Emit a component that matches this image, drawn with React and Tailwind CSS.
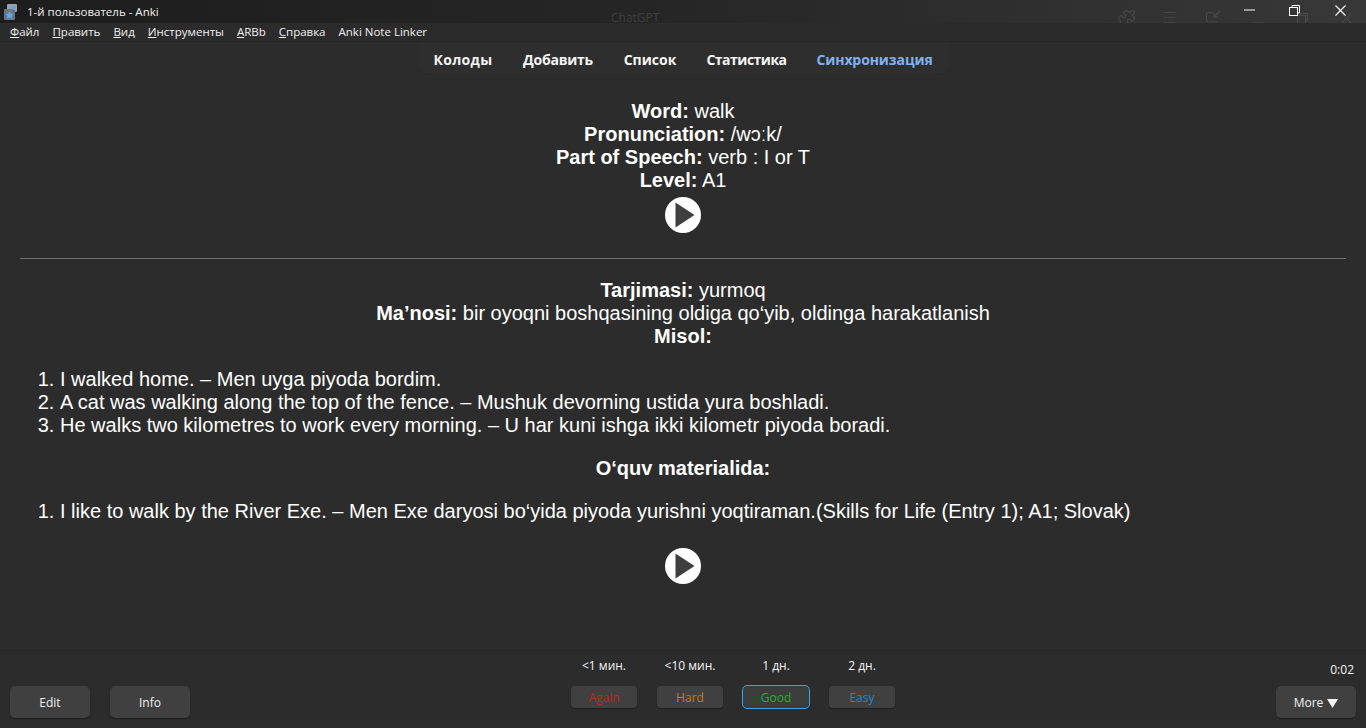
import { Puzzle, Menu } from "lucide-react";

const ui = "font-['Open_Sans','Noto_Sans',sans-serif]";

const menus = [
  ["Ф", "айл"],
  ["П", "равить"],
  ["В", "ид"],
  ["И", "нструменты"],
  ["A", "RBb"],
  ["С", "правка"],
  ["", "Anki Note Linker"],
];

const tabs = [
  { name: "Колоды", width: "w-[59px]", track: "tracking-[0.3px]" },
  { name: "Добавить", width: "w-[71px]", track: "tracking-[-0.25px]" },
  { name: "Список", width: "w-[53px]", track: "" },
  { name: "Статистика", width: "w-[80px]", track: "tracking-[-0.5px]" },
];

const answers = [
  { time: "<1 мин.", label: "Again", color: "text-[#c8201f]" },
  { time: "<10 мин.", label: "Hard", color: "text-[#c87a25]" },
  { time: "1 дн.", label: "Good", color: "text-[#2fae2a]", focus: true },
  { time: "2 дн.", label: "Easy", color: "text-[#2588c8]" },
];

function PlayButton() {
  return (
    <svg viewBox="0 0 36 36" className="block w-9 h-9 mx-auto">
      <circle cx="18" cy="18" r="18" fill="#ffffff" />
      <path d="M10.5 5.5 L29.5 18 L10.5 30.5 Z" fill="#3f3f3f" />
    </svg>
  );
}

function AppIcon() {
  return (
    <svg viewBox="0 0 14 16" className="w-[14px] h-4">
      <rect x="3" y="0" width="10" height="8" rx="1" fill="#9aa0aa" />
      <rect x="0" y="5" width="11" height="11" rx="1" fill="#6b7280" />
      <path d="M9.5 1 l.9 1.7 1.9.3-1.4 1.3.4 1.9-1.8-.9-1.8.9.4-1.9L6.7 3l1.9-.3z" fill="#5aa9ee" />
      <path d="M5.5 7 l1.3 2.6 2.8.4-2 2 .5 2.8-2.6-1.4-2.6 1.4.5-2.8-2-2 2.8-.4z" fill="#5aa9ee" />
    </svg>
  );
}

function GhostIcons() {
  return (
    <div className="absolute inset-0 overflow-hidden text-[#4a4a4a]">
      <Puzzle size={19} strokeWidth={1.4} className="absolute left-[1117px] top-[9px]" />
      <Menu size={17} strokeWidth={1.2} className="absolute left-[1161px] top-[9px]" />
      <svg width="16" height="16" viewBox="0 0 16 16" fill="none" stroke="currentColor" strokeWidth="1.2" className="absolute left-[1206px] top-[10px]">
        <path d="M6 2.5H2.5a2 2 0 0 0-2 2V10a2 2 0 0 0 2 2h9" />
        <path d="M14 1L8 7M8 3v4h4" />
      </svg>
      <svg width="11" height="2" viewBox="0 0 11 2" className="absolute left-[1253px] top-[22px]">
        <path d="M0 1h11" stroke="currentColor" />
      </svg>
      <svg width="11" height="11" viewBox="0 0 11 11" fill="none" stroke="currentColor" className="absolute left-[1297px] top-[13px]">
        <rect x="0.5" y="2.5" width="8" height="8" />
        <path d="M3 2.5V0.5h7.5V8H8.5" />
      </svg>
      <svg width="11" height="11" viewBox="0 0 11 11" stroke="currentColor" className="absolute left-[1341px] top-[13px]">
        <path d="M0.5 0.5l10 10M10.5 0.5l-10 10" />
      </svg>
    </div>
  );
}

function TitleBar() {
  return (
    <div className="relative h-[23px] shrink-0 flex items-center bg-gradient-to-r from-[#1d1d1d] via-[#262626] to-[#383838]">
      <GhostIcons />
      <div className="relative ml-1 w-[14px]">
        <AppIcon />
      </div>
      <span className={`${ui} relative ml-[9px] text-[11.5px] text-[#f0f0f0]`}>1-й пользователь - Anki</span>
      <span className={`${ui} absolute left-[611px] top-[10px] text-[12px] leading-4 text-[#3f3f3f]`}>ChatGPT</span>
      <div className="relative ml-auto mr-[3px] flex items-start h-full pt-[5px]">
        <div className="w-[45px] flex justify-center pt-[4px]">
          <svg width="11" height="2" viewBox="0 0 11 2"><path d="M0 1h11" stroke="#fff" /></svg>
        </div>
        <div className="w-[45px] flex justify-center">
          <svg width="11" height="11" viewBox="0 0 11 11" fill="none" stroke="#fff">
            <rect x="0.5" y="2.5" width="8" height="8" />
            <path d="M3 2.5V0.5h7.5V8H8.5" />
          </svg>
        </div>
        <div className="ml-[1px] w-[45px] flex justify-center">
          <svg width="11" height="11" viewBox="0 0 11 11" stroke="#fff" strokeWidth="1.1">
            <path d="M0.5 0.5l10 10M10.5 0.5l-10 10" />
          </svg>
        </div>
      </div>
    </div>
  );
}

function MenuBar() {
  return (
    <div className={`${ui} h-[19px] shrink-0 flex items-center pl-[10px] gap-[13px] bg-[#2b2b2b] border-b border-[#262626] text-[11.5px] text-[#f0f0f0]`}>
      {menus.map(([key, rest]) => (
        <span key={rest}>
          <span className="underline">{key}</span>
          {rest}
        </span>
      ))}
    </div>
  );
}

function TopTabs() {
  return (
    <div className="h-[33px] shrink-0 flex justify-center">
      <div className={`${ui} h-[33px] pt-[3px] flex items-center gap-[30px] px-[17px] bg-[#2e2e2e] rounded-b-xl border-b border-[#292929] text-[14px] font-bold whitespace-nowrap`}>
        {tabs.map((t) => (
          <span key={t.name} className={`${t.width} ${t.track} flex justify-center text-[#f4f4f4]`}>{t.name}</span>
        ))}
        <span className="w-[116px] flex justify-center tracking-[-0.1px] text-[#7fb3ee]">Синхронизация</span>
      </div>
    </div>
  );
}

function Card() {
  return (
    <div className="flex-1 px-5 pt-[25px] font-['Liberation_Sans',Arial,sans-serif] text-[20px] leading-[23px] text-white">
      <div className="text-center">
        <div><b>Word:</b> walk</div>
        <div><b>Pronunciation:</b> /wɔːk/</div>
        <div><b>Part of Speech:</b> verb : I or T</div>
        <div><b>Level:</b> A1</div>
      </div>
      <div className="mt-[5px]">
        <PlayButton />
      </div>
      <hr className="mt-[25px] border-t border-[#6f6f6f]" />
      <div className="mt-5 text-center">
        <div><b>Tarjimasi:</b> yurmoq</div>
        <div><b>Ma’nosi:</b> bir oyoqni boshqasining oldiga qo‘yib, oldinga harakatlanish</div>
        <div><b>Misol:</b></div>
      </div>
      <ol className="mt-5 pl-10 list-decimal">
        <li>I walked home. – Men uyga piyoda bordim.</li>
        <li>A cat was walking along the top of the fence. – Mushuk devorning ustida yura boshladi.</li>
        <li>He walks two kilometres to work every morning. – U har kuni ishga ikki kilometr piyoda boradi.</li>
      </ol>
      <div className="mt-5 text-center font-bold">O‘quv materialida:</div>
      <ol className="mt-5 pl-10 list-decimal">
        <li>I like to walk by the River Exe. – Men Exe daryosi bo‘yida piyoda yurishni yoqtiraman.(Skills for Life (Entry 1); A1; Slovak)</li>
      </ol>
      <div className="mt-[25px]">
        <PlayButton />
      </div>
    </div>
  );
}

function BarButton({ children, className = "" }) {
  return (
    <div className={`w-20 h-8 pt-[2px] flex items-center justify-center rounded-[5px] bg-[#404040] shadow-[0_1px_1px_#1f1f1f] text-[12px] text-[#f0f0f0] ${className}`}>
      {children}
    </div>
  );
}

function BottomBar() {
  return (
    <div className={`${ui} h-[78px] shrink-0 flex border-t border-[#262626] bg-[#2c2c2c]`}>
      <div className="w-[190px] pl-[10px] pt-[35px] flex gap-5">
        <BarButton>Edit</BarButton>
        <BarButton>Info</BarButton>
      </div>
      <div className="flex-1 flex justify-center">
        <div className="flex flex-col">
          <div className="grid grid-cols-4 w-[344px] pt-[7px] text-center text-[12px] leading-[15px] text-[#f4f4f4]">
            {answers.map((a) => (
              <span key={a.label}>{a.time}</span>
            ))}
          </div>
          <div className="grid grid-cols-4 w-[344px] mt-[12px] justify-items-center">
            {answers.map((a) =>
              a.focus ? (
                <div key={a.label} className={`w-[68px] h-6 pt-[2px] flex items-center justify-center rounded-[5px] bg-[#3c3c3c] border border-[#2ba6e6] text-[12px] ${a.color}`}>
                  {a.label}
                </div>
              ) : (
                <div key={a.label} className={`w-[66px] h-[22px] my-px pt-[2px] flex items-center justify-center rounded-[4px] bg-[#404040] shadow-[0_1px_1px_#1f1f1f] text-[12px] ${a.color}`}>
                  {a.label}
                </div>
              )
            )}
          </div>
        </div>
      </div>
      <div className="w-[90px] flex flex-col items-start">
        <div className="w-20 pt-[11px] text-right text-[12px] leading-[15px] pr-[2px] text-[#f4f4f4]">0:02</div>
        <BarButton className="mt-[9px]">
          <span className="mr-1">More</span>
          <svg width="11" height="9" viewBox="0 0 11 9"><path d="M0 0h11L5.5 9z" fill="#f4f4f4" /></svg>
        </BarButton>
      </div>
    </div>
  );
}

export default function App() {
  return (
    <div className="w-[1366px] h-[728px] overflow-hidden flex flex-col bg-[#2c2c2c]">
      <TitleBar />
      <MenuBar />
      <TopTabs />
      <Card />
      <BottomBar />
    </div>
  );
}
